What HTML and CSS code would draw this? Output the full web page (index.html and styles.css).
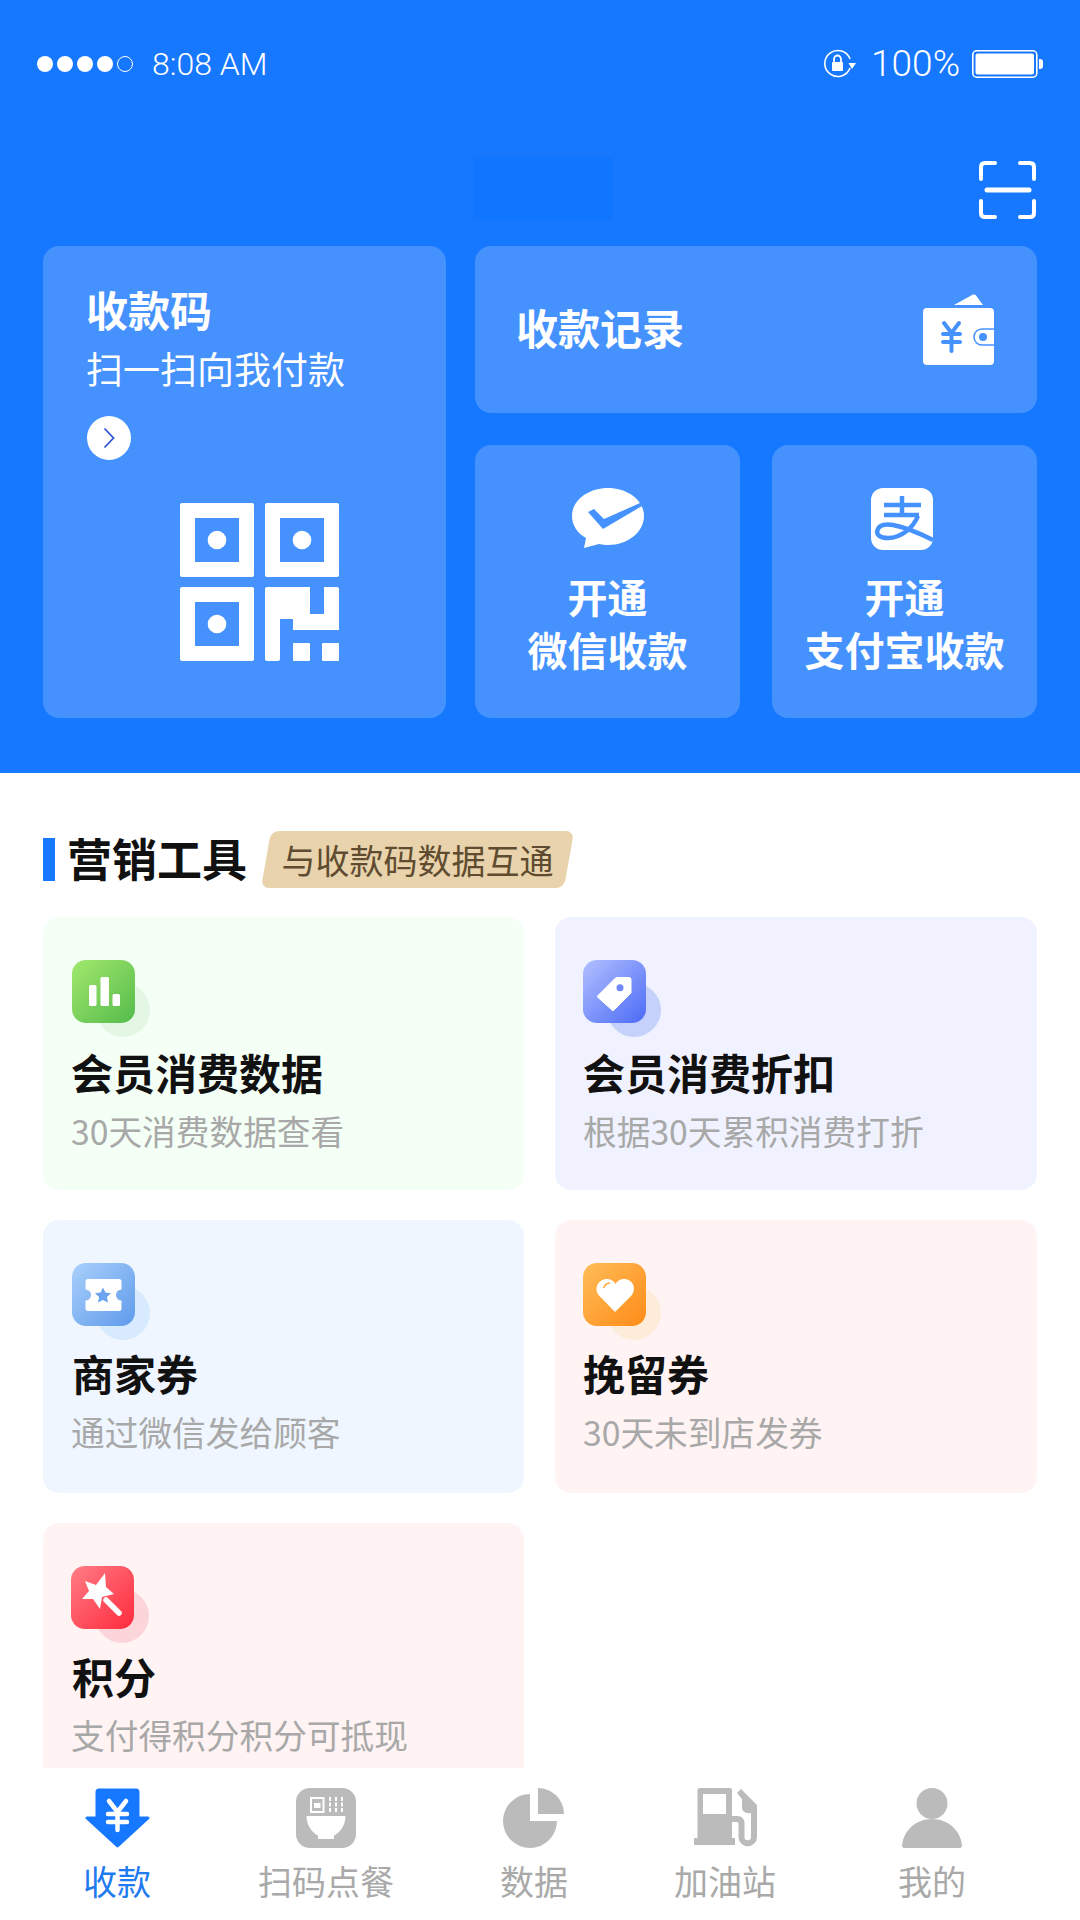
FILE: index.html
```html
<!DOCTYPE html>
<html lang="zh-CN">
<head>
    <meta charset="UTF-8">
    <meta name="viewport" content="width=device-width, initial-scale=1.0">
    <title>收款</title>
    <link rel="stylesheet" href="styles.css">
</head>
<body>
<div class="page">
    <header class="header">
        <div class="status-bar">
            <div class="status-left">
                <div class="signal">
                    <span class="dot"></span><span class="dot"></span><span class="dot"></span><span class="dot"></span><span class="dot dot-empty"></span>
                </div>
                <span class="status-time">8:08 AM</span>
            </div>
            <div class="status-right">
                <svg class="lock-icon" width="34" height="29" viewBox="0 0 34 29">
                    <path d="M27 10 A13 13 0 1 0 27 19" fill="none" stroke="#fff" stroke-width="1.6"/>
                    <path d="M25.5 14 H33 L29 20 Z" fill="#fff"/>
                    <path d="M11 13 V10 a3.5 3.5 0 0 1 7 0 V13" fill="none" stroke="#fff" stroke-width="1.8"/>
                    <rect x="9" y="13" width="11" height="9" rx="1" fill="#fff"/>
                </svg>
                <span class="status-pct">100%</span>
                <svg class="battery-icon" width="71" height="28" viewBox="0 0 71 28">
                    <rect x="0.8" y="0.8" width="64" height="26.4" rx="4" fill="none" stroke="#fff" stroke-width="1.6"/>
                    <rect x="3.5" y="3.5" width="58.5" height="21" rx="2" fill="#fff"/>
                    <path d="M67 9 h1 a3 3 0 0 1 3 3 v4 a3 3 0 0 1 -3 3 h-1 z" fill="#fff"/>
                </svg>
            </div>
        </div>

        <div class="top-row">
            <div class="title-patch"></div>
            <svg class="scan-icon" width="57" height="58" viewBox="0 0 57 58">
                <g fill="none" stroke="#fff" stroke-width="4" stroke-linecap="round" stroke-linejoin="round">
                    <path d="M2 18 V6 Q2 2 6 2 H16"/>
                    <path d="M41 2 H51 Q55 2 55 6 V18"/>
                    <path d="M2 40 V52 Q2 56 6 56 H16"/>
                    <path d="M41 56 H51 Q55 56 55 52 V40"/>
                </g>
                <path d="M8 29 H50" stroke="#fff" stroke-width="5" stroke-linecap="round"/>
            </svg>
        </div>

        <div class="pay-grid">
            <div class="pay-card pay-qr">
                <div class="pay-qr-title">收款码</div>
                <div class="pay-qr-sub">扫一扫向我付款</div>
                <div class="go-btn">
                    <svg width="12" height="22" viewBox="0 0 12 22"><path d="M1.5 1.5 L10.5 11 L1.5 20.5" fill="none" stroke="#2f55d4" stroke-width="1.8"/></svg>
                </div>
                <svg class="qr-icon" width="159" height="158" viewBox="0 0 159 158">
                    <g fill="#fff">
                        <path fill-rule="evenodd" d="M2 0 H72 Q74 0 74 2 V72 Q74 74 72 74 H2 Q0 74 0 72 V2 Q0 0 2 0 Z M15 15 V59 H59 V15 Z"/>
                        <circle cx="37" cy="37" r="9.3"/>
                        <path fill-rule="evenodd" d="M87 0 H157 Q159 0 159 2 V72 Q159 74 157 74 H87 Q85 74 85 72 V2 Q85 0 87 0 Z M100 15 V59 H144 V15 Z"/>
                        <circle cx="122" cy="37" r="9.3"/>
                        <path fill-rule="evenodd" d="M2 84 H72 Q74 84 74 86 V156 Q74 158 72 158 H2 Q0 158 0 156 V86 Q0 84 2 84 Z M15 99 V143 H59 V99 Z"/>
                        <circle cx="37" cy="121" r="9.3"/>
                        <path d="M85 86 Q85 84 87 84 H130 V111 H144 V84 H157 Q159 84 159 86 V127 H113 V116 H100 V156 Q100 158 98 158 H87 Q85 158 85 156 Z"/>
                        <rect x="113" y="140" width="17" height="18" rx="1"/>
                        <rect x="142" y="140" width="17" height="18" rx="1"/>
                    </g>
                </svg>
            </div>

            <div class="pay-side">
                <div class="pay-card pay-record">
                    <span class="pay-record-title">收款记录</span>
                    <svg class="wallet-icon" width="71" height="71" viewBox="0 0 71 71">
                        <path d="M31 11 L50 0.5 Q52 0 53 1.5 L60 11 Z" fill="#fff"/>
                        <rect x="0" y="14" width="71" height="57" rx="4" fill="#fff"/>
                        <path d="M71 35 H59 A8 8 0 0 0 59 51 H71" fill="none" stroke="#4592ff" stroke-width="1.5"/>
                        <circle cx="60" cy="43" r="4" fill="#4592ff"/>
                        <path d="M21 29 L28.5 39 L36 29 M20 40 H37 M20 48 H37 M28.5 39 V57" fill="none" stroke="#4592ff" stroke-width="4" stroke-linecap="round"/>
                    </svg>
                </div>

                <div class="pay-card pay-open">
                    <svg width="72" height="60" viewBox="0 0 72 60">
                        <path d="M36 0 C56 0 72 12.5 72 28 C72 44 56 57 36 57 C33 57 30 56.6 27 56 L12 60 L14 50 C5 45 0 37 0 28 C0 12.5 16 0 36 0 Z" fill="#fff"/>
                        <path d="M16 24 L22 21 L32 31 L68 15 L70 18 L31 41 Z" fill="#4592ff"/>
                    </svg>
                    <div class="pay-open-text">开通<br>微信收款</div>
                </div>

                <div class="pay-card pay-open">
                    <svg class="alipay-icon" width="62" height="62" viewBox="0 0 62 62">
                        <rect width="62" height="62" rx="12" fill="#fff"/>
                        <path d="M13 17 H50 M31 8 V27 M13 27 H48 M47 28 C42 40 30 50 17 50 C8 50 5 46 6.5 42 C8 37 15 36 22 37 C33 39 50 46 62 52" fill="none" stroke="#4592ff" stroke-width="4.5"/>
                    </svg>
                    <div class="pay-open-text">开通<br>支付宝收款</div>
                </div>
            </div>
        </div>
    </header>

    <main class="content">
        <div class="section-head">
            <span class="section-bar"></span>
            <h2 class="section-title">营销工具</h2>
            <span class="section-badge">与收款码数据互通</span>
        </div>

        <div class="tool-grid">
            <div class="tool-card tool-green">
                <div class="tool-icon">
                    <svg width="63" height="63" viewBox="0 0 63 63">
                        <rect x="17" y="25" width="7.5" height="21" rx="1.5" fill="#fff"/>
                        <rect x="28.5" y="17" width="8.5" height="29" rx="1.5" fill="#fff"/>
                        <rect x="40.5" y="34" width="7.5" height="12" rx="1.5" fill="#fff"/>
                    </svg>
                </div>
                <div class="tool-title">会员消费数据</div>
                <div class="tool-sub">30天消费数据查看</div>
            </div>

            <div class="tool-card tool-indigo">
                <div class="tool-icon">
                    <svg width="63" height="63" viewBox="0 0 63 63">
                        <path d="M33 17.5 H46 Q48 17.5 48 19.5 V33 L30 51 L14 36.5 Z" fill="#fff" stroke="#fff" stroke-linejoin="round"/>
                        <circle cx="37" cy="27.7" r="3.5" fill="#7088f8"/>
                    </svg>
                </div>
                <div class="tool-title">会员消费折扣</div>
                <div class="tool-sub">根据30天累积消费打折</div>
            </div>

            <div class="tool-card tool-blue">
                <div class="tool-icon">
                    <svg width="63" height="63" viewBox="0 0 63 63">
                        <path d="M16 16 H47 Q49.5 16 49.5 18.5 V26.5 A5.5 5.5 0 0 0 49.5 37.5 V45.5 Q49.5 48 47 48 H16 Q13.5 48 13.5 45.5 V37.5 A5.5 5.5 0 0 0 13.5 26.5 V18.5 Q13.5 16 16 16 Z" fill="#fff"/>
                        <path d="M31 24.5 L33.4 29.6 L39 30.3 L34.9 34.1 L36 39.6 L31 36.9 L26 39.6 L27.1 34.1 L23 30.3 L28.6 29.6 Z" fill="#6ba3ee"/>
                    </svg>
                </div>
                <div class="tool-title">商家券</div>
                <div class="tool-sub">通过微信发给顾客</div>
            </div>

            <div class="tool-card tool-orange">
                <div class="tool-icon">
                    <svg width="63" height="63" viewBox="0 0 63 63">
                        <path d="M32 49 L16 32.5 C10.5 26 15 16 24 16 C28 16 31 18 32.5 21 C34 18 37 16 41 16 C50 16 54 26 48.5 32.5 Z" fill="#fff"/>
                        <path d="M21 25 C21 22 24 20 27 20" fill="none" stroke="#ffa53a" stroke-width="1.6"/>
                    </svg>
                </div>
                <div class="tool-title">挽留券</div>
                <div class="tool-sub">30天未到店发券</div>
            </div>

            <div class="tool-card tool-red">
                <div class="tool-icon">
                    <svg width="63" height="63" viewBox="0 0 63 63">
                        <path d="M14 15 L25 19 L34 7 L35 21 L43 28 L31 31 L29 43 L22 33 L11 33 L18 25 Z" fill="#fff"/>
                        <path d="M35 34 L48 47" stroke="#fff" stroke-width="5.5" stroke-linecap="round"/>
                    </svg>
                </div>
                <div class="tool-title">积分</div>
                <div class="tool-sub">支付得积分积分可抵现</div>
            </div>
        </div>
    </main>

    <nav class="tabbar">
        <div class="tab tab-active tab-pay">
            <svg width="65" height="60" viewBox="0 0 65 60">
                <path d="M14 2 H51 Q53 2 53 4 V30 H63 L32.5 58 L2 30 H12 V4 Q12 2 14 2 Z" fill="#1677ff" stroke="#1677ff" stroke-width="3" stroke-linejoin="round"/>
                <path d="M24 13 L32.5 24 L41 13 M23 26 H42 M23 34 H42 M32.5 24 V42" fill="none" stroke="#fff" stroke-width="4.5" stroke-linecap="round"/>
            </svg>
            <span class="tab-label">收款</span>
        </div>
        <div class="tab tab-scan">
            <svg width="60" height="60" viewBox="0 0 60 60">
                <rect width="60" height="60" rx="14" fill="#bbb"/>
                <path d="M14 9 H28.5 V25 H14 Z M16 11 V23 H26.5 V11 Z" fill="#fff" fill-rule="evenodd"/>
                <rect x="18" y="15" width="6.5" height="5" fill="#fff"/>
                <path d="M34 9 V25 M40 9 V25 M46 9 V25" stroke="#fff" stroke-width="2" stroke-dasharray="4 1.5"/>
                <path d="M10.5 28 H49.5 C49.5 39 42 46 38 47.5 V50 Q38 51 37 51 H23 Q22 51 22 50 V47.5 C18 46 10.5 39 10.5 28 Z" fill="#fff"/>
            </svg>
            <span class="tab-label">扫码点餐</span>
        </div>
        <div class="tab tab-data">
            <svg class="pie-icon" width="61" height="60" viewBox="0 0 61 60">
                <path d="M27 6 V33 H54 A27 27 0 1 1 27 6 Z" fill="#bbb"/>
                <path d="M35 0 A26 26 0 0 1 61 26 H35 Z" fill="#bbb"/>
            </svg>
            <span class="tab-label">数据</span>
        </div>
        <div class="tab tab-fuel">
            <svg width="63" height="60" viewBox="0 0 63 60">
                <path fill-rule="evenodd" d="M6 0 H36 Q38 0 38 2 V50 H41 V57 H0 V50 H3.5 V2 Q3.5 0 6 0 Z M9 6 V26 H32 V6 Z" fill="#bbb"/>
                <path d="M38 31 H43 Q47.5 31 47.5 36 V49 A6.2 6.2 0 0 0 60 49 V30" fill="none" stroke="#bbb" stroke-width="6"/>
                <path d="M43 5 L47 1 L63 17 V32 H57 V25 Q48 26 48 19 V11 Z" fill="#bbb"/>
            </svg>
            <span class="tab-label">加油站</span>
        </div>
        <div class="tab tab-mine">
            <svg width="60" height="60" viewBox="0 0 60 60">
                <circle cx="30" cy="15.5" r="15.5" fill="#bbb"/>
                <path d="M0 57 C2 42 14 31 30 31 C46 31 58 42 60 57 Q60 60 58 60 H2 Q0 60 0 57 Z" fill="#bbb"/>
            </svg>
            <span class="tab-label">我的</span>
        </div>
    </nav>
</div>
</body>
</html>
```

FILE: styles.css
```css
* {
    box-sizing: border-box;
}

body {
    margin: 0;
    background-color: #fff;
    font-family: "Noto Sans CJK SC", "Noto Sans", sans-serif;
}

.page {
    display: flex;
    flex-direction: column;
    width: 1080px;
    height: 1920px;
    overflow: hidden;
}

/* top blue area */
.header {
    flex: none;
    height: 773px;
    padding-top: 49px;
    background-color: #1677ff;
    color: #fff;
}

.status-bar {
    display: flex;
    justify-content: space-between;
    align-items: center;
    height: 29px;
    padding: 0 37px;
    font-family: Roboto, "Liberation Sans", sans-serif;
    font-weight: 300;
}

.status-left,
.status-right {
    display: flex;
    align-items: center;
}

.signal {
    display: flex;
    gap: 4px;
}

.dot {
    width: 16px;
    height: 16px;
    border-radius: 50%;
    background-color: #fff;
}

.dot-empty {
    border: 1.5px solid #fff;
    background-color: transparent;
}

.status-time {
    margin-left: 19px;
    font-size: 32px;
}

.status-pct {
    margin: 0 12px 0 14px;
    font-size: 37px;
}

.top-row {
    display: flex;
    justify-content: space-between;
    align-items: center;
    height: 63px;
    margin: 79px 0 26px;
    padding: 0 44px 0 474px;
}

.title-patch {
    width: 139px;
    height: 63px;
    background-color: #1075ff;
}

.scan-icon {
    margin-top: 3px;
}

.pay-grid {
    display: flex;
    gap: 29px;
    height: 472px;
    margin: 0 43px;
}

.pay-side {
    display: grid;
    grid-template-columns: 265px 265px;
    grid-template-rows: 167px 273px;
    gap: 32px;
}

.pay-card {
    border-radius: 16px;
    background-color: #4592ff;
}

.pay-qr {
    width: 403px;
    padding: 38px 0 0 43px;
}

.pay-qr-title {
    font-size: 42px;
    font-weight: 700;
    line-height: 50px;
}

.pay-qr-sub {
    margin-top: 12px;
    font-size: 37px;
    line-height: 44px;
}

.go-btn {
    display: flex;
    justify-content: center;
    align-items: center;
    width: 44px;
    height: 44px;
    margin: 26px 0 0 1px;
    border-radius: 50%;
    background-color: #fff;
}

.qr-icon {
    display: block;
    margin: 43px 0 0 94px;
}

.pay-record {
    grid-column: 1 / 3;
    display: flex;
    justify-content: space-between;
    align-items: center;
    padding: 0 43px 6px 41px;
}

.wallet-icon {
    margin-top: 6px;
}

.pay-open {
    display: flex;
    flex-direction: column;
    align-items: center;
    padding-top: 43px;
}

.alipay-icon {
    margin: 0 5px -2px 0;
}

.pay-record-title {
    font-size: 42px;
    font-weight: 700;
}

.pay-open-text {
    margin-top: 22px;
    font-size: 40px;
    font-weight: 700;
    line-height: 53px;
    text-align: center;
}

/* marketing tools */
.content {
    flex: 1;
    min-height: 0;
    overflow: hidden;
    padding: 58px 43px 0;
}

.section-head {
    display: flex;
    align-items: center;
    height: 57px;
    margin-bottom: 29px;
}

.section-bar {
    width: 12px;
    height: 43px;
    margin-right: 12px;
    background-color: #1677ff;
}

.section-title {
    margin: 0 0 4px;
    font-size: 45px;
    font-weight: 700;
    color: #111;
}

.section-badge {
    position: relative;
    z-index: 0;
    width: 303px;
    margin-left: 19px;
    font-size: 34px;
    line-height: 57px;
    color: #5f4c30;
    text-align: center;
    white-space: nowrap;
}

.section-badge::before {
    content: "";
    position: absolute;
    top: 0;
    right: 0;
    bottom: 0;
    left: 0;
    z-index: -1;
    border-radius: 8px;
    background-color: #e8d3ac;
    transform: skewX(-10deg);
}

.tool-grid {
    display: grid;
    grid-template-columns: 481px 482px;
    grid-auto-rows: 273px;
    column-gap: 31px;
    row-gap: 30px;
}

.tool-card {
    padding: 43px 0 0 28px;
    border-radius: 16px;
}

.tool-green,
.tool-blue {
    padding-left: 29px;
}

.tool-icon {
    position: relative;
    width: 63px;
    height: 63px;
    border-radius: 14px;
}

.tool-icon::before {
    content: "";
    position: absolute;
    top: 23px;
    left: 24px;
    z-index: 0;
    width: 54px;
    height: 54px;
    border-radius: 50%;
}

.tool-icon::after {
    content: "";
    position: absolute;
    top: 0;
    left: 0;
    z-index: 1;
    width: 63px;
    height: 63px;
    border-radius: 14px;
}

.tool-icon svg {
    position: relative;
    z-index: 2;
    display: block;
}

.tool-title {
    margin-top: 20px;
    font-size: 42px;
    font-weight: 700;
    line-height: 58px;
    color: #111;
}

.tool-green .tool-title {
    margin-left: -1px;
}

.tool-red .tool-title {
    margin-left: 1px;
}

.tool-blue .tool-title,
.tool-orange .tool-title,
.tool-red .tool-title {
    margin-top: 18px;
}

.tool-sub {
    margin-top: 10px;
    font-size: 33.7px;
    line-height: 40px;
    color: #a8a8a8;
}

.tool-green .tool-sub,
.tool-blue .tool-sub {
    margin-left: -1px;
}

.tool-green {
    background-color: #f4fff6;
}

.tool-green .tool-icon::before {
    background-color: #e3f7e4;
}

.tool-green .tool-icon::after {
    background: linear-gradient(135deg, #a2e86e, #55bb4a);
}

.tool-indigo {
    background-color: #f0f3ff;
}

.tool-indigo .tool-icon::before {
    background-color: #c5d0fb;
}

.tool-indigo .tool-icon::after {
    background: linear-gradient(135deg, #b2c0ff, #4c6bf6);
}

.tool-blue {
    background-color: #eff6ff;
}

.tool-blue .tool-icon::before {
    background-color: #d8eafe;
}

.tool-blue .tool-icon::after {
    background: linear-gradient(135deg, #a9d0fb, #5f9aeb);
}

.tool-orange {
    background-color: #fff4f3;
}

.tool-orange .tool-icon::before {
    background-color: #fdecd9;
}

.tool-orange .tool-icon::after {
    background: linear-gradient(135deg, #ffbd58, #ff8b18);
}

.tool-red {
    background-color: #fff4f3;
}

.tool-red .tool-icon::before {
    background-color: #fcd5da;
}

.tool-red .tool-icon::after {
    background: linear-gradient(135deg, #ff7d86, #ff2a3c);
}

/* bottom tabs */
.tabbar {
    flex: none;
    display: flex;
    height: 152px;
    padding: 20px 0 0 17px;
    background-color: #fff;
}

.tab {
    display: flex;
    flex-direction: column;
    align-items: center;
    flex: none;
}

.tab svg {
    display: block;
}

.tab-pay {
    width: 200px;
}

.tab-scan {
    width: 218px;
}

.tab-data {
    width: 198px;
}

.tab-fuel {
    width: 184px;
}

.tab-mine {
    width: 230px;
}

.tab .pie-icon {
    margin-right: 2px;
}

.tab-label {
    margin-top: 13px;
    font-size: 34px;
    line-height: 40px;
    color: #a9a9a9;
}

.tab-active .tab-label {
    color: #1e7bf0;
}
```
